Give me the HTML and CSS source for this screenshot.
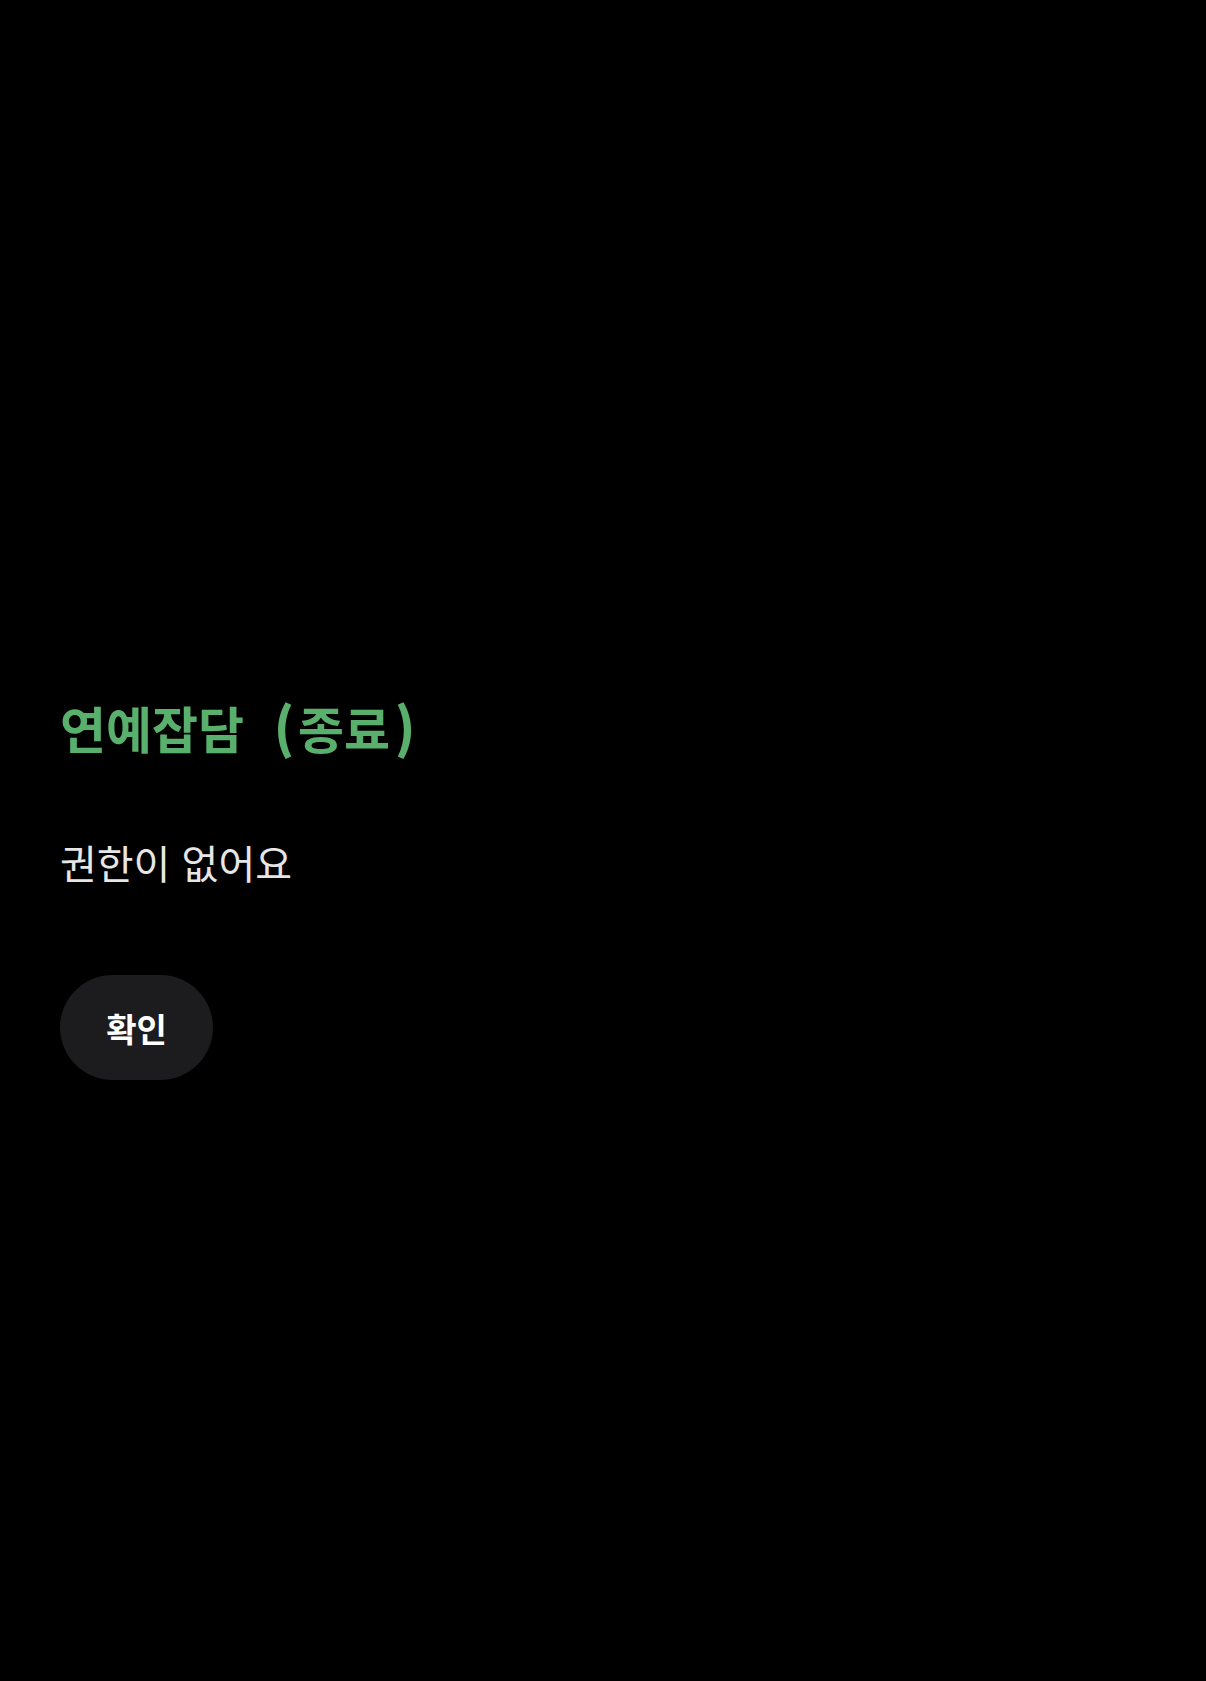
FILE: index.html
```html
<!DOCTYPE html>
<html lang="ko">
<head>
<meta charset="utf-8">
<link rel="stylesheet" href="styles.css">
</head>
<body>
<main class="screen">
  <h1 class="title">연예잡담 <span class="paren paren-open">(</span>종료<span class="paren paren-close">)</span></h1>
  <p class="message">권한이 없어요</p>
  <button class="confirm" type="button">확인</button>
</main>
</body>
</html>
```
FILE: styles.css
```css
html, body {
  margin: 0;
  padding: 0;
  background: #000;
}
body {
  width: 1206px;
  height: 1681px;
  font-family: "Noto Sans CJK KR", "Noto Sans", sans-serif;
}
.screen {
  display: flex;
  flex-direction: column;
  align-items: flex-start;
  padding: 695px 60px 0;
}
.title {
  margin: 0;
  font-size: 50px;
  line-height: 64px;
  font-weight: 700;
  color: #58b06c;
}
.paren {
  display: inline-block;
  font-weight: 900;
  transform: scaleY(1.08);
}
.paren-open {
  margin-left: 16px;
  margin-right: 4px;
}
.paren-close {
  margin-left: 5px;
}
.message {
  margin: 78px 0 0;
  font-size: 40px;
  line-height: 50px;
  font-weight: 400;
  color: #e6e6e6;
}
.confirm {
  margin-top: 88px;
  width: 153px;
  height: 105px;
  border: none;
  border-radius: 53px;
  background: #1c1c1e;
  color: #fff;
  font-family: inherit;
  font-size: 33px;
  font-weight: 700;
  padding: 0;
}
```
